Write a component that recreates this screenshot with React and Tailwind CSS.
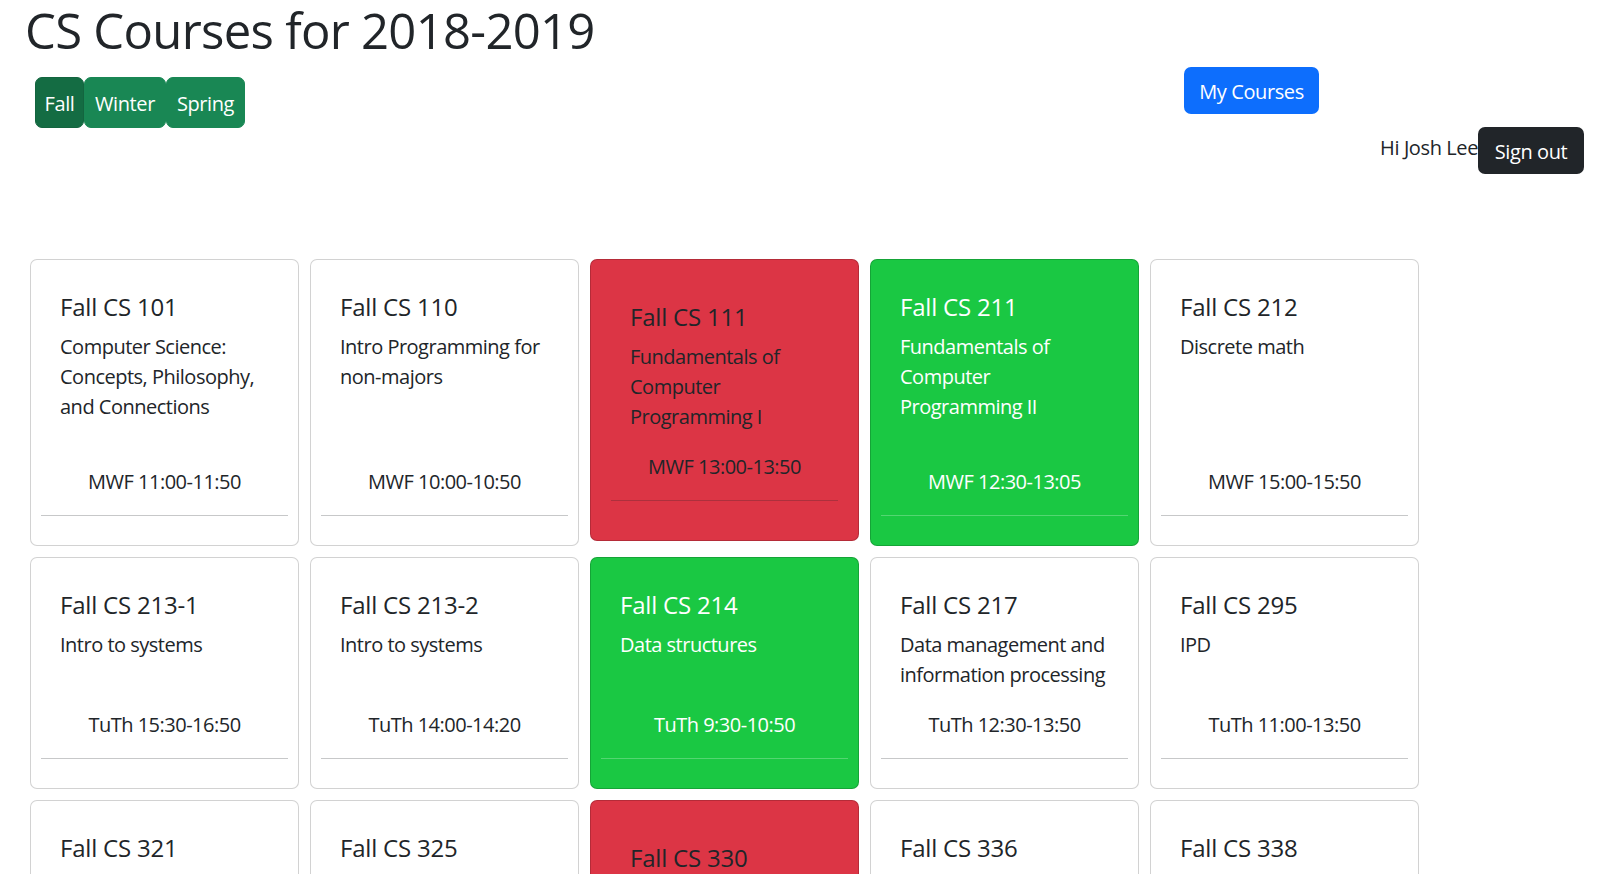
import React from 'react';

const COURSES = [
  { id: '101', title: 'Computer Science: Concepts, Philosophy, and Connections', meets: 'MWF 11:00-11:50' },
  { id: '110', title: 'Intro Programming for non-majors', meets: 'MWF 10:00-10:50' },
  { id: '111', title: 'Fundamentals of Computer Programming I', meets: 'MWF 13:00-13:50', state: 'conflict' },
  { id: '211', title: 'Fundamentals of Computer Programming II', meets: 'MWF 12:30-13:05', state: 'selected' },
  { id: '212', title: 'Discrete math', meets: 'MWF 15:00-15:50' },
  { id: '213-1', title: 'Intro to systems', meets: 'TuTh 15:30-16:50' },
  { id: '213-2', title: 'Intro to systems', meets: 'TuTh 14:00-14:20' },
  { id: '214', title: 'Data structures', meets: 'TuTh 9:30-10:50', state: 'selected' },
  { id: '217', title: 'Data management and information processing', meets: 'TuTh 12:30-13:50' },
  { id: '295', title: 'IPD', meets: 'TuTh 11:00-13:50' },
  { id: '321', title: 'Programming languages', meets: 'MWF 10:00-10:50' },
  { id: '325', title: 'Artificial Intelligence Programming', meets: 'TuTh 15:30-16:50' },
  { id: '330', title: 'Human Computer Interaction', meets: 'MWF 13:00-13:50', state: 'conflict' },
  { id: '336', title: 'Design & Analysis of Algorithms', meets: 'TuTh 14:00-15:20' },
  { id: '338', title: 'Practicum in Intelligent Information Systems', meets: 'MWF 9:00-9:50' },
];

const CARD_STYLES = {
  normal:   'bg-white text-[#212529] px-[10px] pt-[32px] pb-[29px]',
  selected: 'bg-[#1ac843] text-white px-[10px] pt-[32px] pb-[29px]',
  conflict: 'bg-[#dc3545] text-[#212529] px-[20px] pt-[42px] pb-[39px] self-start mb-[5px]',
};

function CourseCard({ course }) {
  const cls = CARD_STYLES[course.state] ?? CARD_STYLES.normal;
  return (
    <div className={`flex flex-col rounded-[7px] border border-black/[0.175] ${cls}`}>
      <div className="px-[19px]">
        <h5 className="text-[24px] leading-[30px] tracking-[-0.2px]">Fall CS {course.id}</h5>
        <p className="mt-[10px] text-[20px] leading-[30px] tracking-[-0.5px]">{course.title}</p>
      </div>
      <div className="mt-auto pt-[20px] text-center text-[20px] leading-[30px] tracking-[-0.5px]">
        {course.meets}
      </div>
      {/* bootstrap-ish hr: current colour at 25% */}
      <div className="mt-[18px] h-px bg-current opacity-25" />
    </div>
  );
}

export default function App() {
  return (
    <div className="min-h-screen bg-white pb-10 font-['Open_Sans',sans-serif] text-[#212529]">
      <h1 className="pl-[25px] text-[49px] leading-[60px] tracking-[-0.7px]">CS Courses for 2018-2019</h1>

      <div className="flex items-start">
        {/* term selector */}
        <div className="ml-[35px] mt-[17px] flex text-[20px] leading-[30px] tracking-[-0.4px] text-white">
          <button className="h-[51px] w-[49px] rounded-[7px] border border-[#13653f] bg-[#146c43] pt-[3px]">Fall</button>
          <button className="h-[51px] w-[82px] rounded-[7px] border border-[#198754] bg-[#198754] pt-[3px]">Winter</button>
          <button className="h-[51px] w-[79px] rounded-[7px] border border-[#198754] bg-[#198754] pt-[3px]">Spring</button>
        </div>

        {/* user area */}
        <div className="ml-[939px] mt-[7px] flex w-[400px] flex-col items-start">
          <button className="h-[47px] w-[135px] rounded-[7px] bg-[#0d6efd] pt-[2px] text-[20px] leading-[30px] tracking-[-0.4px] text-white">
            My Courses
          </button>
          <div className="mt-[13px] flex w-full items-start justify-end">
            <span className="mt-[6px] text-[20px] leading-[30px] tracking-[-0.4px]">Hi Josh Lee</span>
            <button className="h-[47px] w-[106px] rounded-[7px] bg-[#212529] pt-[2px] text-[20px] leading-[30px] tracking-[-0.4px] text-white">
              Sign out
            </button>
          </div>
        </div>
      </div>

      <div className="ml-[30px] mt-[85px] grid grid-cols-[repeat(5,269px)] gap-[11px]">
        {COURSES.map((c) => (
          <CourseCard key={c.id} course={c} />
        ))}
      </div>
    </div>
  );
}
